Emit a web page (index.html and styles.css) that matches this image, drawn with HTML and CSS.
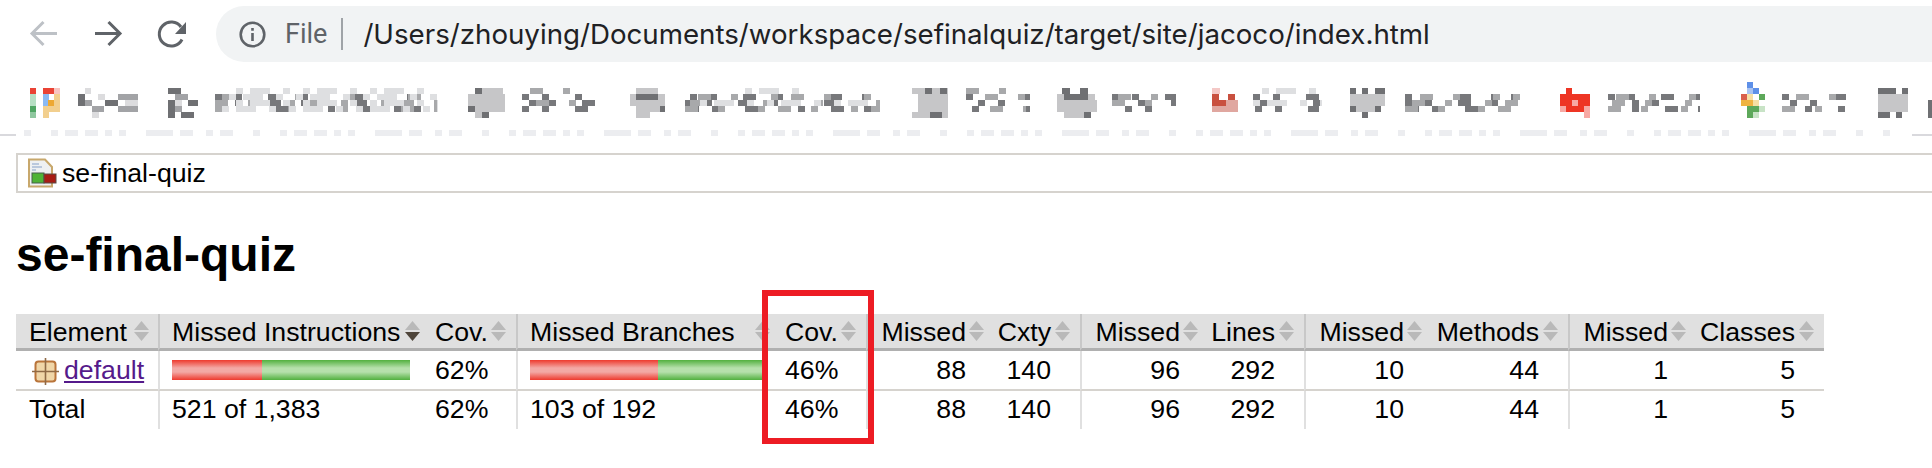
FILE: index.html
```html
<!DOCTYPE html>
<html lang="en">
<head>
  <meta charset="UTF-8" />
  <title>se-final-quiz</title>
  <link rel="stylesheet" href="styles.css">
</head>
<body>

  <!-- Browser toolbar -->
  <header class="toolbar">
    <svg class="nav nav-off" viewBox="0 0 32 32"><path d="M29 15.500H4M15.500 4L4 15.500 15.500 27"/></svg>
    <svg class="nav" viewBox="0 0 32 32"><path d="M3 15.500H28M16.500 4L28 15.500 16.500 27"/></svg>
    <svg class="nav" viewBox="0 0 32 32"><path d="M26 21.500A12 12 0 1 1 25 9"/><path class="fill" d="M30 4V16H19Z"/></svg>
    <div class="omnibox">
      <svg class="info" viewBox="0 0 27 27"><circle cx="13.500" cy="13.500" r="11.800"/><path d="M13.500 12V20M13.500 7V9.800"/></svg>
      <span class="scheme">File</span>
      <span class="sep"></span>
      <span class="url">/Users/zhouying/Documents/workspace/sefinalquiz/target/site/jacoco/index.html</span>
    </div>
  </header>

  <!-- Bookmarks bar (pixelated in the screenshot) -->
  <svg class="bookmarks" viewBox="0 68 1932 85" width="1932" height="85" shape-rendering="crispEdges">
    <path fill="#ea4335" d="M30 88h6v6h-6zM43 88h11v6H43z"/>
    <path fill="#f8c4c0" d="M54 88h6v6h-6z"/>
    <path fill="#b7dfc4" d="M30 94h6v12h-6z"/>
    <path fill="#8ab9f3" d="M43 94h6v12h-6z"/>
    <path fill="#f2cf8e" d="M54 94h6v12h-6zM43 106h17v6H43zM43 112h6v6h-6z"/>
    <path fill="#eda832" d="M48 100h6v6h-6z"/>
    <path fill="#4fa563" d="M30 106h6v6h-6z"/>
    <path fill="#8fc79f" d="M30 112h6v6h-6z"/>

    <path class="gray-a" d="M78 97h7M105 103h13M78 103h7M168 91h13M168 103h7M188 103h10M168 109h7M181 115h13M168 115h7"/>
    <path class="gray-b" d="M85 103h7M118 97h20M92 109h12M118 109h20M175 97h13M175 109h7"/>
    <path class="gray-c" d="M85 91h6M92 115h7M98 97h7M125 103h13M175 103h7"/>

    <path class="mq-a" d="M215 97h223M215 103h223M222 109h210"/>
    <path class="mq-b" d="M222 97h216M215 103h223M215 109h223"/>
    <path class="mq-c" d="M236 91h196M229 97h209M236 103h202M222 109h216"/>

    <path class="blob" d="M475 91h28M468 97h37M468 103h37M468 109h37M475 115h14"/>
    <path class="gray-a" d="M482 115h7M475 91h7M468 109h7"/>
    <path class="mq-a" d="M522 97h60M529 103h72M522 109h72"/>
    <path class="mq-b" d="M530 91h68M536 103h64"/>

    <path class="blob" d="M636 91h22M630 97h35M630 103h35M636 109h29M636 115h14"/>
    <path class="gray-a" d="M636 97h22M660 109h5"/>
    <path class="mq-a" d="M690 97h188M685 103h195M692 109h180"/>
    <path class="mq-b" d="M698 97h182M690 103h190M685 109h195"/>
    <path class="mq-c" d="M745 91h60M700 103h170"/>

    <path class="blob" d="M912 91h36M918 97h30M918 103h30M918 109h30M912 115h36"/>
    <path class="gray-a" d="M925 91h7M940 91h7M930 115h12"/>
    <path class="mq-a" d="M966 97h64M978 103h46M972 109h58"/>
    <path class="mq-b" d="M966 91h40M985 97h40M990 109h36"/>

    <path class="blob" d="M1057 97h38M1057 103h40M1057 109h40M1064 115h20"/>
    <path class="gray-a" d="M1062 91h8M1080 91h8M1064 97h24M1084 115h7"/>
    <path class="mq-a" d="M1112 97h64M1118 103h58M1125 109h46"/>
    <path class="mq-b" d="M1118 97h58M1112 103h60"/>

    <path fill="#f4c8c6" d="M1212 88h8v6h-8z"/>
    <path fill="#c9503f" d="M1212 94h7v6h-7zM1228 94h7v6h-7zM1212 100h14v6h-14z"/>
    <path fill="#e0a7a0" d="M1226 100h12v6h-12zM1212 106h26v6h-26z"/>
    <path class="mq-a" d="M1253 97h69M1260 103h62M1255 109h64"/>
    <path class="mq-c" d="M1262 91h58M1253 103h69"/>

    <path class="blob" d="M1350 97h35M1350 103h35M1356 109h24M1362 115h6"/>
    <path class="gray-a" d="M1350 91h6M1362 91h6M1375 91h10M1350 109h6M1375 109h6M1362 115h6"/>
    <path class="mq-a" d="M1405 97h120M1405 103h110M1412 109h100"/>
    <path class="mq-b" d="M1420 97h100M1412 103h113M1405 109h120"/>

    <path fill="#ee3524" d="M1566 88h6v6h-6zM1560 94h30v12h-30zM1566 106h18v6h-18z"/>
    <path fill="#f7a9a4" d="M1560 106h6v6h-6zM1584 106h6v12h-6zM1572 100h6v6h-6z"/>
    <path class="mq-a" d="M1608 97h92M1612 109h88M1632 103h60"/>
    <path class="mq-b" d="M1616 97h84M1608 109h92M1612 103h88"/>

    <path fill="#5e90e8" d="M1747 82h6v6h-6zM1753 88h6v6h-6z"/>
    <path fill="#a9c3f1" d="M1747 88h6v6h-6z"/>
    <path fill="#d95f4c" d="M1741 94h6v6h-6z"/>
    <path fill="#f6dfa4" d="M1747 94h6v6h-6zM1753 100h6v6h-6z"/>
    <path fill="#efb341" d="M1741 100h12v6h-12z"/>
    <path fill="#5da85a" d="M1747 106h12v6h-12zM1747 112h6v6h-6zM1759 94h6v6h-6z"/>
    <path fill="#c8e3c6" d="M1759 106h6v6h-6zM1753 112h6v6h-6z"/>
    <path class="mq-a" d="M1782 97h64M1790 103h50M1785 109h60"/>
    <path class="mq-b" d="M1782 109h64M1796 97h50"/>

    <path class="blob" d="M1878 97h30M1878 103h30M1878 109h30"/>
    <path class="gray-a" d="M1878 91h18M1902 91h6M1878 115h12M1896 115h6"/>
    <path class="gray-a" d="M1928 103h4M1928 109h4M1928 115h4"/>

    <path class="strip" d="M24 133H1890"/>
    <path class="edge" d="M0 135H16M1912 135H1932"/>
  </svg>

  <div class="breadcrumb">
    <svg class="el-report" viewBox="0 0 30 30">
      <path class="sheet" d="M2 1.500H18L25 9V28.500H2Z"/>
      <path class="lines" d="M5 6H12M5 9H15M5 12H9"/>
      <rect class="hit" x="5" y="15" width="12" height="10"/>
      <rect class="miss" x="17" y="16" width="12" height="9"/>
    </svg>
    <span>se-final-quiz</span>
  </div>

  <h1>se-final-quiz</h1>

  <div class="report">
    <table class="coverage">
      <colgroup>
        <col class="w1"><col class="w2"><col class="w3"><col class="w4"><col class="w5">
        <col class="w6"><col class="w7"><col class="w8"><col class="w9">
        <col class="w6"><col class="w11"><col class="w6"><col class="w13">
      </colgroup>
      <thead>
        <tr>
          <th class="el sort">Element</th>
          <th class="bar sort-down">Missed Instructions</th>
          <th class="ctr2l sort">Cov.</th>
          <th class="bar sort">Missed Branches</th>
          <th class="ctr2l sort">Cov.</th>
          <th class="ctr1 sort">Missed</th>
          <th class="ctr2 sort">Cxty</th>
          <th class="ctr1 sort">Missed</th>
          <th class="ctr2 sort">Lines</th>
          <th class="ctr1 sort">Missed</th>
          <th class="ctr2 sort">Methods</th>
          <th class="ctr1 sort">Missed</th>
          <th class="ctr2 sort">Classes</th>
        </tr>
      </thead>
      <tbody>
        <tr>
          <td class="el">
            <svg class="el-package" viewBox="0 0 27 27">
              <rect class="box" x="3.500" y="3.500" width="20" height="20" rx="3"/>
              <path class="cross" d="M13.500 0V27M0 13.500H27"/>
            </svg><a href="#default">default</a>
          </td>
          <td class="bar"><div class="meter"><div class="red" style="width:90px"></div><div class="green" style="width:148px"></div></div></td>
          <td class="ctr2l">62%</td>
          <td class="bar"><div class="meter"><div class="red" style="width:128px"></div><div class="green" style="width:106px"></div></div></td>
          <td class="ctr2l">46%</td>
          <td class="ctr1">88</td>
          <td class="ctr2">140</td>
          <td class="ctr1">96</td>
          <td class="ctr2">292</td>
          <td class="ctr1">10</td>
          <td class="ctr2">44</td>
          <td class="ctr1">1</td>
          <td class="ctr2">5</td>
        </tr>
      </tbody>
      <tfoot>
        <tr>
          <td class="el">Total</td>
          <td class="bar">521 of 1,383</td>
          <td class="ctr2l">62%</td>
          <td class="bar">103 of 192</td>
          <td class="ctr2l">46%</td>
          <td class="ctr1">88</td>
          <td class="ctr2">140</td>
          <td class="ctr1">96</td>
          <td class="ctr2">292</td>
          <td class="ctr1">10</td>
          <td class="ctr2">44</td>
          <td class="ctr1">1</td>
          <td class="ctr2">5</td>
        </tr>
      </tfoot>
    </table>
    <div class="callout"></div>
  </div>

</body>
</html>
```

FILE: styles.css
```css
* { box-sizing: border-box; }
body {
  margin: 0;
  background: #fff;
  color: #000;
  font-family: "Liberation Sans", Arial, sans-serif;
}

/* Browser toolbar */
.toolbar {
  display: flex;
  align-items: center;
  gap: 32px;
  height: 68px;
  padding: 6px 0 6px 28px;
}
.nav {
  width: 32px;
  height: 32px;
  flex: none;
  fill: none;
  stroke: #5f6368;
  stroke-width: 3;
}
.nav .fill { fill: #5f6368; stroke: none; }
.nav-off { stroke: #bdc1c6; }
.omnibox {
  flex: 1;
  display: flex;
  align-items: center;
  height: 56px;
  margin-left: -4px;
  padding-left: 23px;
  background: #f1f3f4;
  border-radius: 28px 0 0 28px;
  font-family: Inter, sans-serif;
  font-size: 27.700px;
}
.info {
  width: 27px;
  height: 27px;
  fill: none;
  stroke: #5f6368;
  stroke-width: 2.600;
}
.scheme { margin-left: 19px; color: #5f6368; font-family: Roboto, sans-serif; font-size: 27px; }
.sep {
  width: 2px;
  height: 32px;
  margin: 0 20px 0 14px;
  background: #9fa3a7;
}
.url { color: #202124; white-space: nowrap; }

/* Mosaic of the bookmarks */
.bookmarks { display: block; }
.gray-a, .gray-b, .gray-c, .blob, .mq-a, .mq-b, .mq-c, .strip, .edge { fill: none; }
.gray-a, .gray-b, .gray-c, .blob, .mq-a, .mq-b, .mq-c { stroke-width: 6; }
.gray-a { stroke: #6f7073; }
.gray-b { stroke: #a2a3a6; }
.gray-c { stroke: #dcdcde; }
.blob { stroke: #c6c6c8; }
.mq-a { stroke: #77787b; stroke-dasharray: 7 13 7 26 13 20; }
.mq-b { stroke: #a8a9ab; stroke-dasharray: 13 20 7 33 7 13; }
.mq-c { stroke: #dedfe1; stroke-dasharray: 7 7 20 13 7 13; }
.strip { stroke: #ecedf0; stroke-width: 6; stroke-dasharray: 7 20 7 7 13 7 13 7 7 7 7 20 27 7 13 13 7 7 13 20; }
.edge { stroke: #d9d9dd; stroke-width: 2; }

/* Breadcrumb */
.breadcrumb {
  display: flex;
  align-items: center;
  gap: 5px;
  height: 40px;
  margin-left: 16px;
  padding-left: 9px;
  border: 2px solid #d6d3ce;
  border-right: none;
  font-size: 26.700px;
}
.el-report { width: 30px; height: 30px; flex: none; }
.sheet { fill: #eef0f2; stroke: #c8a86c; stroke-width: 2; }
.lines { fill: none; stroke: #a9bbd6; stroke-width: 1.500; }
.hit { fill: #4fb336; stroke: #46604a; stroke-width: 1; }
.miss { fill: #a81c14; stroke: #5b4a44; stroke-width: 1; }

h1 {
  margin: 34px 0 31px 16px;
  font-size: 48px;
  line-height: 56px;
  font-weight: bold;
}

/* Coverage table */
.report { position: relative; padding-bottom: 24px; }
.coverage {
  table-layout: fixed;
  width: 1808px;
  margin-left: 16px;
  border-spacing: 0;
  font-size: 26.700px;
}
.w1 { width: 142px; }
.w2 { width: 265px; }
.w3 { width: 93px; }
.w4 { width: 257px; }
.w5 { width: 93px; }
.w6 { width: 122px; }
.w7 { width: 92px; }
.w8 { width: 122px; }
.w9 { width: 102px; }
.w11 { width: 142px; }
.w13 { width: 134px; }

.coverage th, .coverage td {
  padding: 0;
  white-space: nowrap;
  overflow: hidden;
  font-weight: normal;
  text-align: left;
}
.coverage th {
  height: 37px;
  padding-top: 3px;
  background-color: #e0e0e0;
  border-bottom: 3px solid #b0b0b0;
  background-repeat: no-repeat;
}
.coverage tbody td {
  height: 40px;
  border-bottom: 2px solid #d6d3ce;
}
.coverage tfoot td { height: 38px; padding-bottom: 2px; }

.sort {
  background-image: url("data:image/svg+xml,%3Csvg xmlns='http://www.w3.org/2000/svg' width='15' height='20'%3E%3Cpath fill='%23b9b9b9' d='M7.500 0L15 9H0ZM0 11H15L7.500 20Z'/%3E%3C/svg%3E");
}
.sort-down {
  background-image: url("data:image/svg+xml,%3Csvg xmlns='http://www.w3.org/2000/svg' width='15' height='20'%3E%3Cpath fill='%23b9b9b9' d='M7.500 0L15 9H0Z'/%3E%3Cpath fill='%234f453a' d='M0 11H15L7.500 20Z'/%3E%3C/svg%3E");
}
th.el { padding-left: 13px; background-position: right 9px center; }
th.bar { background-position: right 3px center; }
th.ctr2l, th.ctr2 { background-position: right 10px center; }
th.ctr1 { background-position: right 4px center; }

.el { padding-left: 13px !important; }
.bar, .ctr1 { border-left: 2px solid #e0e0e0; }
th.bar, th.ctr1 { border-left-color: #c8c8c8; }
.bar { padding-left: 12px !important; }
.ctr2l { padding-left: 12px !important; }
.ctr1 { padding-right: 22px !important; text-align: right !important; }
.ctr2 { padding-right: 29px !important; text-align: right !important; }

.el-package {
  width: 27px;
  height: 27px;
  margin: 0 5px 0 3px;
  vertical-align: -6px;
}
.box { fill: #f0d6a8; stroke: #b9743a; stroke-width: 2; }
.cross { fill: none; stroke: #8f6a46; stroke-width: 1.600; }
.coverage a { color: #551a8b; }

.meter { display: flex; height: 20px; }
.red { background: linear-gradient(#ee3a2e, #f3a9a5 40%, #f3a9a5 60%, #ee3a2e); }
.green { background: linear-gradient(#52b03f, #b6e0ac 40%, #b6e0ac 60%, #52b03f); }

/* Red annotation round the second Cov. column */
.callout {
  position: absolute;
  left: 762px;
  top: -24px;
  width: 112px;
  height: 154px;
  border: 6px solid #ed1c24;
}
```
